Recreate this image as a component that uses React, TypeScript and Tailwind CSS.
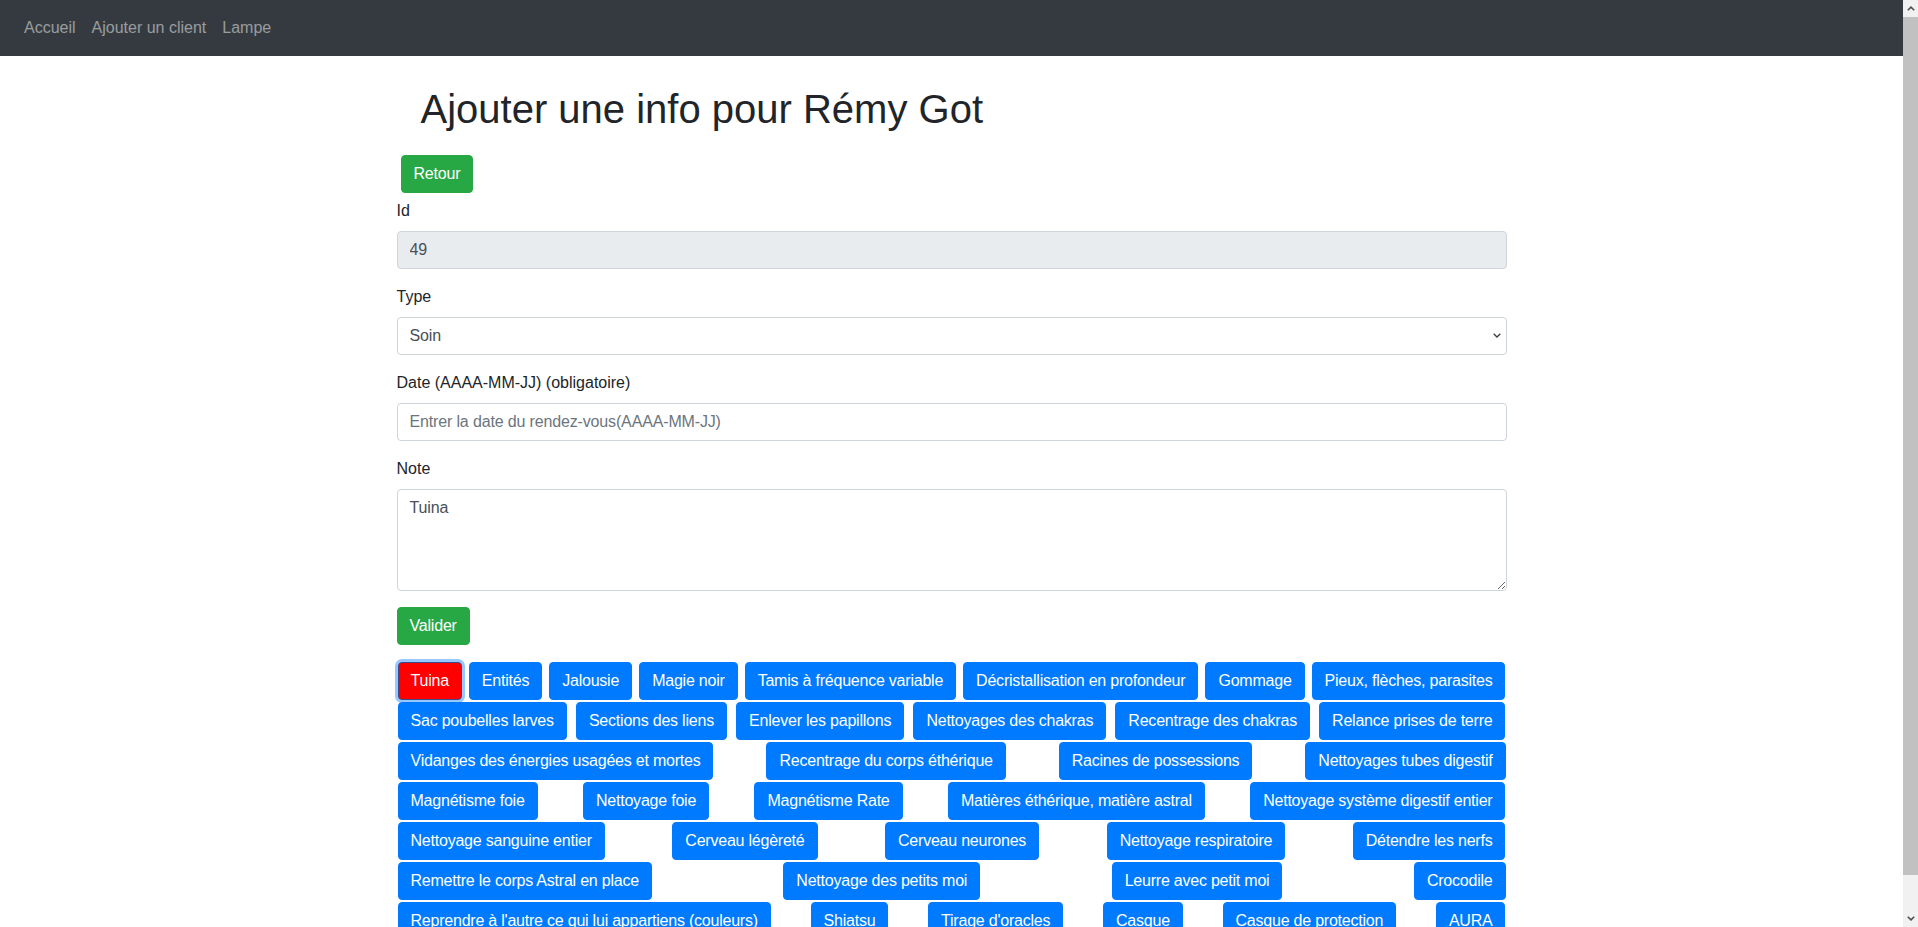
import React from "react";

const rows: string[][] = [
  [
    "Tuina",
    "Entités",
    "Jalousie",
    "Magie noir",
    "Tamis à fréquence variable",
    "Décristallisation en profondeur",
    "Gommage",
    "Pieux, flèches, parasites",
  ],
  [
    "Sac poubelles larves",
    "Sections des liens",
    "Enlever les papillons",
    "Nettoyages des chakras",
    "Recentrage des chakras",
    "Relance prises de terre",
  ],
  [
    "Vidanges des énergies usagées et mortes",
    "Recentrage du corps éthérique",
    "Racines de possessions",
    "Nettoyages tubes digestif",
  ],
  [
    "Magnétisme foie",
    "Nettoyage foie",
    "Magnétisme Rate",
    "Matières éthérique, matière astral",
    "Nettoyage système digestif entier",
  ],
  [
    "Nettoyage sanguine entier",
    "Cerveau légèreté",
    "Cerveau neurones",
    "Nettoyage respiratoire",
    "Détendre les nerfs",
  ],
  [
    "Remettre le corps Astral en place",
    "Nettoyage des petits moi",
    "Leurre avec petit moi",
    "Crocodile",
  ],
  [
    "Reprendre à l'autre ce qui lui appartiens (couleurs)",
    "Shiatsu",
    "Tirage d'oracles",
    "Casque",
    "Casque de protection",
    "AURA",
  ],
];

const inputClass =
  "block w-full h-[38px] px-3 border border-[#ced4da] rounded-[4px] text-base leading-6 tracking-[-0.15px] text-[#495057] bg-white outline-none";

// the browser's own scrollbar does not show in the screenshot, so draw it
const FakeScrollbar = () => (
  <div className="fixed top-0 right-0 w-[15px] h-screen bg-[#f1f1f1] flex flex-col">
    <div className="h-[17px] flex items-center justify-center">
      <svg className="w-[8px] h-[5px]" viewBox="0 0 8 5" fill="none">
        <path d="M0.8 4.3L4 1.1L7.2 4.3" stroke="#505050" strokeWidth="1.6" />
      </svg>
    </div>
    <div className="h-[858px] bg-[#c1c1c1]" />
    <div className="flex-1" />
    <div className="h-[17px] flex items-center justify-center">
      <svg className="w-[8px] h-[5px]" viewBox="0 0 8 5" fill="none">
        <path d="M0.8 0.7L4 3.9L7.2 0.7" stroke="#505050" strokeWidth="1.6" />
      </svg>
    </div>
  </div>
);

export default function App() {
  return (
    <div className="min-h-screen mr-[15px] bg-white text-[#212529] font-['Liberation_Sans',Arial,sans-serif] text-base leading-6 pb-6">
      {/* NAVBAR */}
      <nav className="h-14 bg-[#343a40] px-4 flex items-center">
        <a className="px-2 text-white/50">Accueil</a>
        <a className="px-2 text-white/50">Ajouter un client</a>
        <a className="px-2 text-white/50">Lampe</a>
      </nav>

      <div className="w-[1140px] mx-auto px-[15px]">
        <h1 className="pl-6 mt-[29px] mb-[22px] text-[40px] leading-[48px] font-normal">
          Ajouter une info pour Rémy Got
        </h1>

        <div>
          <button className="ml-1 h-[38px] px-3 rounded-[4px] bg-[#28a745] border border-[#28a745] text-white tracking-[-0.2px]">
            Retour
          </button>
        </div>

        <form className="mt-[6px]">
          <div className="mb-4">
            <label className="block mb-2">Id</label>
            <input className={`${inputClass} !bg-[#e9ecef]`} value="49" readOnly />
          </div>

          <div className="mb-4">
            <label className="block mb-2">Type</label>
            <div className="relative">
              <select className={`${inputClass} appearance-none`} defaultValue="Soin">
                <option>Soin</option>
              </select>
              <svg
                className="absolute right-[6px] top-[16px] w-[8px] h-[5px] pointer-events-none"
                viewBox="0 0 8 5"
                fill="none"
              >
                <path d="M0.7 0.7L4 4L7.3 0.7" stroke="#3c3c3c" strokeWidth="1.3" />
              </svg>
            </div>
          </div>

          <div className="mb-4">
            <label className="block mb-2">Date (AAAA-MM-JJ) (obligatoire)</label>
            <input
              className={`${inputClass} placeholder:text-[#6c757d]`}
              placeholder="Entrer la date du rendez-vous(AAAA-MM-JJ)"
            />
          </div>

          <div className="mb-4">
            <label className="block mb-2">Note</label>
            <textarea
              className="block w-full h-[102px] px-3 py-1.5 border border-[#ced4da] rounded-[4px] text-base leading-6 tracking-[-0.15px] text-[#495057] bg-white outline-none"
              defaultValue="Tuina"
            />
          </div>

          <button
            type="button"
            className="h-[38px] px-3 rounded-[4px] bg-[#28a745] border border-[#28a745] text-white tracking-[-0.2px]"
          >
            Valider
          </button>
        </form>

        {/* SOINS */}
        <div className="mt-4">
          {rows.map((row, i) => (
            <div key={i} className="flex justify-between">
              {row.map((label) => (
                <button
                  key={label}
                  className={
                    label === "Tuina"
                      ? "m-px h-[38px] px-3 rounded-[4px] bg-[#ff0000] border border-[#3a4a8a] text-white tracking-[-0.22px] ring-[3px] ring-[#98c6ff] whitespace-nowrap"
                      : "m-px h-[38px] px-3 rounded-[4px] bg-[#007bff] border border-[#007bff] text-white tracking-[-0.22px] whitespace-nowrap"
                  }
                >
                  {label}
                </button>
              ))}
            </div>
          ))}
        </div>
      </div>

      <FakeScrollbar />
    </div>
  );
}
